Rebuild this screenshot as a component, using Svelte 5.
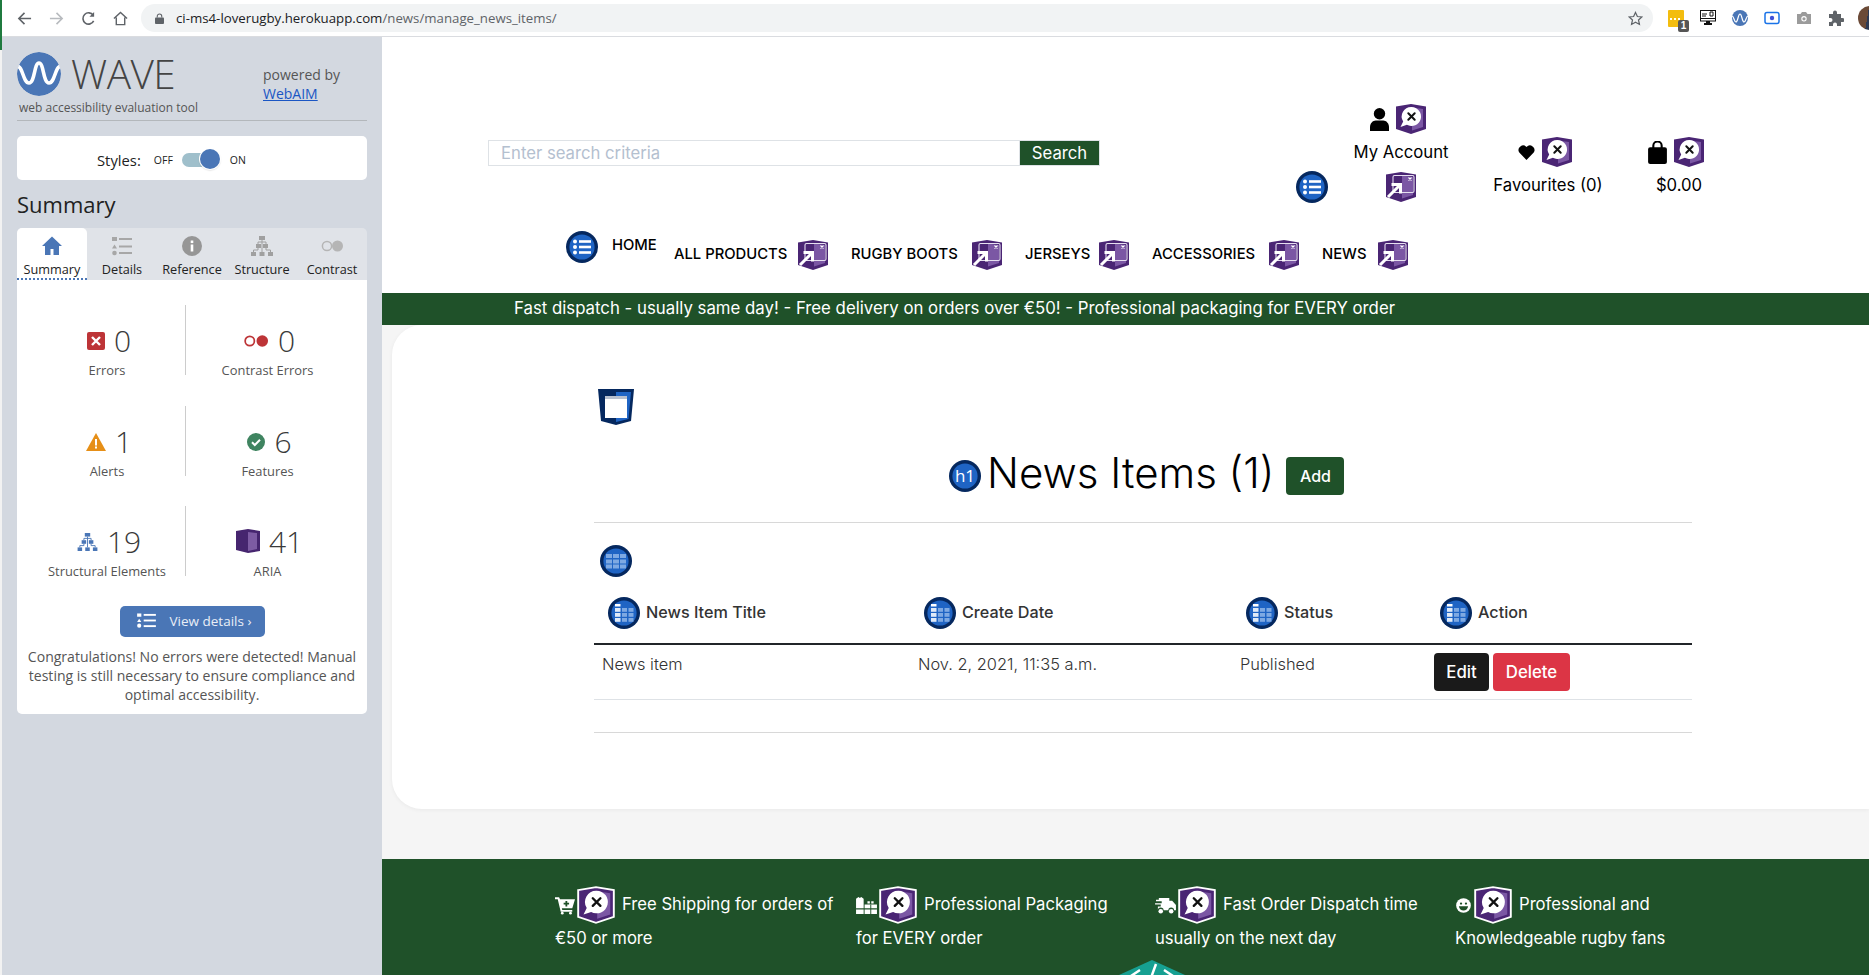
<script lang="ts">
  const navItems = ['ALL PRODUCTS', 'RUGBY BOOTS', 'JERSEYS', 'ACCESSORIES', 'NEWS']
  const tableHeads = ['News Item Title', 'Create Date', 'Status', 'Action']
  const footerItems = [
    { icon: 'cart', first: 'Free Shipping for orders of', second: '€50 or more' },
    { icon: 'gift', first: 'Professional Packaging', second: 'for EVERY order' },
    { icon: 'truck', first: 'Fast Order Dispatch time', second: 'usually on the next day' },
    { icon: 'smile', first: 'Professional and', second: 'Knowledgeable rugby fans' },
  ]
  const stats = [
    { icon: 'error', count: 0, label: 'Errors' },
    { icon: 'contrast', count: 0, label: 'Contrast Errors' },
    { icon: 'alert', count: 1, label: 'Alerts' },
    { icon: 'feature', count: 6, label: 'Features' },
    { icon: 'structure', count: 19, label: 'Structural Elements' },
    { icon: 'aria', count: 41, label: 'ARIA' },
  ]
  const tabs = ['Summary', 'Details', 'Reference', 'Structure', 'Contrast']
</script>

{#snippet shieldBase(outline)}
  <path d="M1 3.5L16 1l15 2.500V26l-15 5L1 26Z" fill="#4a2574" stroke={outline ? '#fff' : 'none'} stroke-width={outline ? 1.6 : 0} />
  <path d="M17 4.5l11 1.500V24l-11 3.500Z" fill="#7b57a4" />
{/snippet}

{#snippet ariaX(outline = false)}
  <svg class="shield" class:outlined={outline} viewBox="0 0 32 32">
    {@render shieldBase(outline)}
    <path d="M16.500 4a9.500 9.500 0 1 1-4.600 17.800L5.500 24l2.700-5.400A9.500 9.500 0 0 1 16.500 4Z" fill="#fff" />
    <path d="M13.300 10.300l6.400 6.400M19.700 10.300l-6.400 6.400" stroke="#111" stroke-width="2" stroke-linecap="round" />
  </svg>
{/snippet}

{#snippet ariaLink()}
  <svg class="shield" viewBox="0 0 32 32">
    {@render shieldBase(false)}
    <rect x="8" y="4.500" width="21" height="17" rx="1.500" fill="none" stroke="#e6dff0" stroke-width="1.100" />
    <path d="M23.500 6.500l3 3M26.500 6.500l-3 3" stroke="#fff" stroke-width="1.100" />
    <path d="M3 26l11.500-11.500M6.500 13.500h9v9" fill="none" stroke="#fff" stroke-width="3" />
  </svg>
{/snippet}

{#snippet blueDot(kind)}
  <svg class="dot" viewBox="0 0 32 32">
    <circle cx="16" cy="16" r="16" fill="#05285f" />
    <circle cx="16" cy="16" r="12.600" fill="#1f64c4" />
    {#if kind === 'list'}
      <g fill="#fff">
        <circle cx="9" cy="10.500" r="2" /><circle cx="9" cy="16" r="2" /><circle cx="9" cy="21.500" r="2" />
        <rect x="13" y="9.200" width="12" height="2.600" /><rect x="13" y="14.700" width="12" height="2.600" /><rect x="13" y="20.200" width="12" height="2.600" />
      </g>
    {:else if kind === 'table'}
      <g fill="#7ea9e2">
        {#each [9, 14.500, 19.500] as y}
          {#each [6, 13, 20] as x}
            <rect {x} {y} width="6" height="4" />
          {/each}
        {/each}
      </g>
    {:else}
      <g fill="#7ea9e2">
        {#each [11, 16, 21] as y}
          <rect x="7" {y} width="5.500" height="3.800" fill="#dfeaf8" />
          <rect x="14" {y} width="5" height="3.800" />
          <rect x="20.500" {y} width="5" height="3.800" />
        {/each}
      </g>
      <rect x="7" y="7" width="5.500" height="2.500" fill="#fff" />
    {/if}
  </svg>
{/snippet}

{#snippet footIcon(kind)}
  <svg class="foot-icon {kind}" viewBox="0 0 22 20" fill="#fff">
    {#if kind === 'cart'}
      <path d="M0 1h4.500l1 2H22l-3 10H7.500l.5 2h11v2H6.300L3 3H0Z" /><circle cx="8" cy="18.500" r="1.500" /><circle cx="17" cy="18.500" r="1.500" />
      <path d="M11.500 5h2v2h2v2h-2v2h-2V9h-2V7h2Z" fill="#1f5129" />
    {:else if kind === 'gift'}
      <path d="M0 3l2.500-2L4 2l1.500-1L8 3v16H0ZM9 9h13v10H9ZM12 5.500h2.500V8H12ZM16 5.500h2.500V8H16Z" />
      <path d="M0 13h22v1.200H0ZM15 9h1v10h-1Z" fill="#1f5129" />
    {:else if kind === 'truck'}
      <path d="M4 2h11v3h3l4 4.500V15h-2a3 3 0 0 0-6 0H9a3 3 0 0 0-6 0V11h3V9H0V7.500h7V5.500H1V4h3Z" />
      <circle cx="6" cy="16" r="2.400" /><circle cx="17" cy="16" r="2.400" />
    {:else}
      <circle cx="11" cy="10" r="9.500" />
      <circle cx="7.800" cy="7.500" r="1.500" fill="#1f5129" /><circle cx="14.200" cy="7.500" r="1.500" fill="#1f5129" />
      <path d="M5 11h12c-.5 3.500-3 5.500-6 5.500S5.500 14.500 5 11Z" fill="#1f5129" />
    {/if}
  </svg>
{/snippet}

{#snippet statIcon(kind)}
  {#if kind === 'error'}
    <svg class="stat-icon" viewBox="0 0 18 18"><rect width="18" height="18" rx="2" fill="#bd3437" /><path d="M5 5l8 8M13 5l-8 8" stroke="#fff" stroke-width="2.400" /></svg>
  {:else if kind === 'contrast'}
    <svg class="stat-icon wide" viewBox="0 0 26 14"><circle cx="6" cy="7" r="4.800" fill="none" stroke="#bd3437" stroke-width="1.800" /><circle cx="19" cy="7" r="6" fill="#bd3437" /></svg>
  {:else if kind === 'alert'}
    <svg class="stat-icon alert" viewBox="0 0 20 18"><path d="M10 0L20 18H0Z" fill="#e68f17" /><rect x="9" y="6" width="2" height="6.500" fill="#fff" /><rect x="9" y="13.500" width="2" height="2" fill="#fff" /></svg>
  {:else if kind === 'feature'}
    <svg class="stat-icon" viewBox="0 0 18 18"><circle cx="9" cy="9" r="9" fill="#3f8460" /><path d="M5 9.300l2.800 2.700L13 6.800" fill="none" stroke="#fff" stroke-width="2" /></svg>
  {:else if kind === 'structure'}
    <svg class="stat-icon tree" viewBox="0 0 22 20" fill="#4a76b6">
      <rect x="8" y="0" width="6" height="4" /><rect x="4.500" y="8" width="5" height="4" /><rect x="12.500" y="8" width="5" height="4" />
      <rect x="0" y="16" width="5" height="4" /><rect x="8.500" y="16" width="5" height="4" /><rect x="17" y="16" width="5" height="4" />
      <path d="M11 4v12M7 12v2H2.500v2M15 12v2h4.500v2M7 8V6h8v2" fill="none" stroke="#4a76b6" />
    </svg>
  {:else}
    <svg class="stat-icon aria" viewBox="0 0 24 24"><path d="M0 2L12 0l12 2v20l-12 2-12-3Z" fill="#46256f" /><path d="M12 3l9 1v16l-9 2Z" fill="#7d5ba3" /></svg>
  {/if}
{/snippet}

<div class="page">
  <div class="sliver"></div>
  <div class="window">
    <header class="chrome">
      <svg class="nav-btn" viewBox="0 0 16 16" fill="none" stroke="#5f6368" stroke-width="1.700"><path d="M15 8H2M8 2L2 8l6 6" /></svg>
      <svg class="nav-btn off" viewBox="0 0 16 16" fill="none" stroke="#b8bbbf" stroke-width="1.700"><path d="M1 8h13M8 2l6 6-6 6" /></svg>
      <svg class="nav-btn" viewBox="0 0 16 16" fill="none" stroke="#5f6368" stroke-width="1.700"><path d="M13.500 10.500A6 6 0 1 1 13 4.500" /><path d="M14 1v5H9" fill="#5f6368" stroke="none" /></svg>
      <svg class="nav-btn" viewBox="0 0 16 16" fill="none" stroke="#5f6368" stroke-width="1.500"><path d="M1 8l7-6.500L15 8M3.500 7v7.500h9V7" /></svg>
      <div class="omnibox">
        <svg class="lock" viewBox="0 0 10 12" fill="#5f6368"><rect y="5" width="10" height="7" rx="1" /><path d="M2.500 5V3.500a2.500 2.500 0 0 1 5 0V5" fill="none" stroke="#5f6368" stroke-width="1.200" /></svg>
        <span class="url">ci-ms4-loverugby.herokuapp.com<span class="url-path">/news/manage_news_items/</span></span>
        <svg class="star" viewBox="0 0 16 16" fill="none" stroke="#5f6368" stroke-width="1.300"><path d="M8 1.500l2 4.400 4.700.5-3.500 3.200 1 4.700L8 11.900l-4.200 2.400 1-4.700L1.300 6.400 6 5.900Z" /></svg>
      </div>
      <div class="extensions">
        <div class="ext-yellow">
          <svg viewBox="0 0 16 17"><rect width="16" height="17" rx="1" fill="#f3bd0f" /><path d="M2 8h2v2H2ZM6 8h2v2H6ZM10 8h2v2h-2Z" fill="#fff" /></svg>
          <span class="ext-badge">1</span>
        </div>
        <svg class="ext" viewBox="0 0 16 16"><rect x="0.500" y="0.500" width="15" height="10.500" fill="#fff" stroke="#111" /><path d="M2 4h5M2 6h4M10 2h3v4h-3ZM0 8.500h16" stroke="#111" fill="none" /><path d="M6 11h4v2h2v2H4v-2h2Z" fill="#111" /></svg>
        <svg class="ext" viewBox="0 0 16 16"><circle cx="8" cy="8" r="8" fill="#4a76b6" /><path d="M0 6c2 0 2 6 4 6s2-8 4-8 2 8 4 8 2-6 4-6" fill="none" stroke="#fff" stroke-width="1.200" /></svg>
        <svg class="ext" viewBox="0 0 16 16"><rect x="1" y="2.500" width="14" height="11" rx="2" fill="none" stroke="#1a73e8" stroke-width="1.500" /><circle cx="8" cy="8" r="2.200" fill="#3f51d8" /></svg>
        <svg class="ext" viewBox="0 0 16 16" fill="#9b9b9b"><path d="M1 4h3.500L6 2h4l1.500 2H15v10H1Z" /><circle cx="8" cy="8.800" r="2.700" fill="#fff" /><circle cx="8" cy="8.800" r="1.600" /></svg>
        <svg class="ext" viewBox="0 0 16 16" fill="#5f6368"><path d="M1 4h4V2.500a2 2 0 0 1 4 0V4h4v4h1.500a2 2 0 0 1 0 4H13v4H9v-1.500a2 2 0 0 0-4 0V16H1v-4h1.500a2 2 0 0 0 0-4H1Z" /></svg>
        <div class="avatar"></div>
      </div>
    </header>

    <div class="body">
      <aside class="wave">
        <div class="brand">
          <div class="brand-left">
            <div class="logo-row">
              <svg class="logo" viewBox="0 0 44 44">
                <circle cx="22" cy="22" r="22" fill="#4a76b6" />
                <path d="M0 14c6 0 6 17 12 17s5-20 10-20 4 20 10 20 6-17 12-17" fill="none" stroke="#fff" stroke-width="3.600" />
              </svg>
              <span class="logo-text">WAVE</span>
            </div>
            <div class="tagline">web accessibility evaluation tool</div>
          </div>
          <div class="powered">
            powered by<br />
            <a href="#webaim">WebAIM</a>
          </div>
        </div>

        <div class="styles-card">
          <span class="styles-label">Styles:</span>
          <span class="toggle-word">OFF</span>
          <span class="toggle"><span class="knob"></span></span>
          <span class="toggle-word">ON</span>
        </div>

        <h2 class="summary-title">Summary</h2>

        <div class="tabs">
          {#each tabs as tab, i}
            <div class="tab" class:active={i === 0}>
              <svg class="tab-icon" viewBox="0 0 22 22">
                {#if i === 0}
                  <path d="M11 1.500L1 11h3v9h5.500v-6h3v6H18v-9h3Z" fill="#4a76b6" />
                {:else if i === 1}
                  <g fill="#a7a7a7"><rect x="1" y="2" width="5" height="4" /><path d="M3.500 9.500l2.500 4H1Z" /><circle cx="3.500" cy="18" r="2.300" /><rect x="8" y="3" width="13" height="2" /><rect x="8" y="10.500" width="13" height="2" /><rect x="8" y="17" width="13" height="2" /></g>
                {:else if i === 2}
                  <circle cx="11" cy="11" r="10" fill="#969696" /><rect x="9.700" y="9.500" width="2.600" height="7" fill="#fff" /><rect x="9.700" y="5.500" width="2.600" height="2.600" fill="#fff" />
                {:else if i === 3}
                  <g fill="#a0a0a0"><rect x="8" y="1" width="6" height="4" /><rect x="5" y="9" width="5" height="4" /><rect x="12" y="9" width="5" height="4" /><rect x="0" y="17" width="5" height="4" /><rect x="8.500" y="17" width="5" height="4" /><rect x="17" y="17" width="5" height="4" /></g>
                  <path d="M11 5v12M7 13v2H2.500v2M15 13v2h4.500v2M7 9V7h8v2" fill="none" stroke="#a0a0a0" />
                {:else}
                  <circle cx="6" cy="11" r="4.600" fill="none" stroke="#b5b5b5" stroke-width="1.500" /><circle cx="16.500" cy="11" r="5.500" fill="#b5b5b5" />
                {/if}
              </svg>
              <span>{tab}</span>
            </div>
          {/each}
        </div>

        <div class="panel">
          <div class="stats">
            {#each stats as stat}
              <div class="stat">
                <div class="stat-top">
                  {@render statIcon(stat.icon)}
                  <span class="count">{stat.count}</span>
                </div>
                <div class="stat-label">{stat.label}</div>
              </div>
            {/each}
          </div>
          <button class="view-details">
            <svg viewBox="0 0 20 16" fill="#fff"><rect x="0" y="0.500" width="4.500" height="3.500" /><path d="M2.200 6l2.300 3.500H0Z" /><circle cx="2.200" cy="13.500" r="2.200" /><rect x="7" y="1" width="13" height="2" /><rect x="7" y="7" width="13" height="2" /><rect x="7" y="13" width="13" height="2" /></svg>
            <span>View details ›</span>
          </button>
          <p class="congrats">Congratulations! No errors were detected! Manual testing is still necessary to ensure compliance and optimal accessibility.</p>
        </div>
      </aside>

      <main class="site">
        <div class="site-top">
          <div class="search">
            <span class="search-input">Enter search criteria</span>
            <span class="search-btn">Search</span>
          </div>
          <div class="account">
            <div class="icon-row">
              <svg class="user" viewBox="0 0 20 24" fill="#000"><circle cx="10" cy="6" r="6" /><path d="M0 24v-4c0-4 3-7 6-7h8c3 0 6 3 6 7v4Z" /></svg>
              {@render ariaX()}
            </div>
            <div class="head-label">My Account</div>
            <span class="account-list">{@render blueDot('list')}</span>
            <span class="account-link">{@render ariaLink()}</span>
          </div>
          <div class="head-item favourites">
            <div class="icon-row">
              <svg class="heart" viewBox="0 0 16 15" fill="#000"><path d="M8 15L1.200 8A4.300 4.300 0 0 1 8 2.800 4.300 4.300 0 0 1 14.800 8Z" /></svg>
              {@render ariaX()}
            </div>
            <div class="head-label">Favourites (0)</div>
          </div>
          <div class="head-item basket">
            <div class="icon-row">
              <svg class="bag" viewBox="0 0 18 22"><rect y="6" width="18" height="16" rx="2" fill="#000" /><path d="M5 9V4.500a4 4 0 0 1 8 0V9" fill="none" stroke="#000" stroke-width="2" /></svg>
              {@render ariaX()}
            </div>
            <div class="head-label">$0.00</div>
          </div>
        </div>

        <nav class="menu">
          {@render blueDot('list')}
          <a class="home" href="#home">HOME</a>
          {#each navItems as item}
            <div class="menu-item">
              <span>{item}</span>
              {@render ariaLink()}
            </div>
          {/each}
        </nav>

        <div class="banner">Fast dispatch - usually same day! - Free delivery on orders over €50! - Professional packaging for EVERY order</div>

        <div class="content">
          <section class="card">
            <svg class="html-badge" viewBox="0 0 36 36">
              <path d="M0 0h36l-3 32-15 4-15-4Z" fill="#05285f" />
              <path d="M18 3h15l-2.500 27L18 33Z" fill="#1f64c4" />
              <rect x="7" y="7" width="22" height="22" fill="#fff" />
              <rect x="7" y="7" width="22" height="3" fill="#b8c0cf" />
            </svg>

            <div class="title-row">
              <svg class="dot" viewBox="0 0 32 32">
                <circle cx="16" cy="16" r="16" fill="#05285f" />
                <circle cx="16" cy="16" r="12.600" fill="#1f64c4" />
                <text x="16" y="22" text-anchor="middle" fill="#fff" font-size="17" font-family="Open Sans, sans-serif">h1</text>
              </svg>
              <h1>News Items (1)</h1>
              <a class="btn btn-add" href="#add">Add</a>
            </div>

            <hr class="rule first" />

            <div class="table-mark">{@render blueDot('table')}</div>

            <table>
              <thead>
                <tr>
                  {#each tableHeads as head}
                    <th><div class="th-inner">{@render blueDot('th')}<span>{head}</span></div></th>
                  {/each}
                </tr>
              </thead>
              <tbody>
                <tr>
                  <td>News item</td>
                  <td>Nov. 2, 2021, 11:35 a.m.</td>
                  <td>Published</td>
                  <td>
                    <div class="actions">
                      <a class="btn btn-edit" href="#edit">Edit</a>
                      <a class="btn btn-delete" href="#delete">Delete</a>
                    </div>
                  </td>
                </tr>
              </tbody>
            </table>

            <hr class="rule last" />
          </section>
        </div>

        <footer class="site-foot">
          {#each footerItems as item}
            <div class="foot-item">
              <div class="foot-line">
                {@render footIcon(item.icon)}
                {@render ariaX(true)}
                <span class="foot-first">{item.first}</span>
              </div>
              <div class="foot-second">{item.second}</div>
            </div>
          {/each}
          <svg class="hex" viewBox="0 0 88 40">
            <path d="M0 20L44 0l44 20v20H0Z" fill="#16a092" />
            <path d="M32 10l-9 6 9 6M56 10l9 6-9 6M48 4l-8 22" fill="none" stroke="#fff" stroke-width="2.500" />
          </svg>
        </footer>
      </main>
    </div>
  </div>
</div>

<style>
  :global(body) {
    margin: 0;
    background: #fff;
  }

  .page {
    display: flex;
    width: 1869px;
    height: 975px;
    overflow: hidden;
    font-family: 'Open Sans', sans-serif;
  }

  .sliver {
    width: 2px;
    flex-shrink: 0;
    background: linear-gradient(#1f7a3f 0 50px, #f2f2f2 50px);
  }

  .window {
    flex: 1;
    display: flex;
    flex-direction: column;
    min-width: 0;
  }

  /* browser toolbar */
  .chrome {
    height: 36px;
    border-bottom: 1px solid #dadce0;
    display: flex;
    align-items: center;
    background: #fff;
    flex-shrink: 0;
  }

  .nav-btn {
    width: 15px;
    height: 15px;
    margin-left: 15px;
    margin-right: 2px;
    flex-shrink: 0;
  }

  .omnibox {
    width: 1512px;
    height: 28px;
    margin-left: 11px;
    background: #f1f3f4;
    border-radius: 14px;
    display: flex;
    align-items: center;
    padding: 0 10px 0 14px;
    box-sizing: border-box;
    flex-shrink: 0;
  }

  .lock {
    width: 9px;
    height: 11px;
    margin-right: 12px;
  }

  .url {
    font-size: 13.250px;
    color: #202124;
    white-space: nowrap;
  }

  .url-path {
    color: #5f6368;
  }

  .star {
    width: 15px;
    height: 15px;
    margin-left: auto;
  }

  .extensions {
    display: flex;
    align-items: center;
    margin-left: 15px;
    flex-shrink: 0;
  }

  .ext-yellow {
    position: relative;
    width: 16px;
    height: 17px;
    margin-right: 16px;
  }

  .ext-yellow svg {
    width: 16px;
    height: 17px;
    display: block;
  }

  .ext-badge {
    position: absolute;
    left: 10px;
    top: 10px;
    width: 11px;
    height: 12px;
    background: #555;
    color: #fff;
    border-radius: 2px;
    font: 700 10px/12px 'Liberation Sans', sans-serif;
    text-align: center;
  }

  .ext {
    width: 16px;
    height: 16px;
    margin-right: 16px;
    flex-shrink: 0;
  }

  .avatar {
    width: 24px;
    height: 24px;
    margin-left: -2px;
    border-radius: 50%;
    background: linear-gradient(100deg, #6b4a37 0 40%, #2e3b55 40%);
    flex-shrink: 0;
  }

  .body {
    flex: 1;
    display: flex;
    min-height: 0;
  }

  /* WAVE sidebar */
  .wave {
    width: 380px;
    flex-shrink: 0;
    background: #d3d8e0;
    padding: 15px 15px 0;
    box-sizing: border-box;
    color: #333;
  }

  .brand {
    display: flex;
    justify-content: space-between;
    height: 68px;
    border-bottom: 1px solid #b3b7bb;
  }

  .logo-row {
    display: flex;
    align-items: center;
    gap: 10px;
    height: 44px;
  }

  .logo {
    width: 44px;
    height: 44px;
    clip-path: circle(50%);
  }

  .logo-text {
    font-size: 40.500px;
    font-weight: 300;
    color: #444;
    line-height: 44px;
    letter-spacing: -0.5px;
  }

  .tagline {
    font-size: 12px;
    color: #555;
    margin: 4px 0 0 2px;
    line-height: 16px;
  }

  .powered {
    font-size: 14px;
    line-height: 19px;
    color: #555;
    padding-top: 13px;
    width: 104px;
  }

  .powered a {
    color: #1a56c4;
  }

  .styles-card {
    height: 44px;
    margin-top: 15px;
    padding: 4px 0 0 80px;
    background: #fff;
    border-radius: 5px;
    display: flex;
    align-items: center;
    box-sizing: border-box;
  }

  .styles-label {
    font-size: 14.800px;
    color: #222;
    margin-right: 13px;
  }

  .toggle-word {
    font-size: 10.500px;
    color: #222;
  }

  .toggle {
    position: relative;
    width: 33px;
    height: 14px;
    margin: 0 15px 0 9px;
    border-radius: 7px;
    background: #9fbfcb;
  }

  .knob {
    position: absolute;
    right: -5px;
    top: -4px;
    width: 20px;
    height: 20px;
    border-radius: 50%;
    background: #4a76b6;
    box-shadow: 0 0 0 1px #fff, 0 1px 2px rgba(0, 0, 0, 0.3);
  }

  .summary-title {
    margin: 5px 0 4px;
    font-size: 22px;
    font-weight: 400;
    line-height: 39px;
    color: #222;
    height: 39px;
  }

  .tabs {
    display: grid;
    grid-template-columns: repeat(5, 70px);
    height: 52px;
    background: #e0e3e8;
    border-radius: 5px 5px 0 0;
  }

  .tab {
    display: flex;
    flex-direction: column;
    align-items: center;
    font-size: 12.700px;
    color: #222;
    padding-top: 7px;
    box-sizing: border-box;
    white-space: nowrap;
  }

  .tab span {
    line-height: 18px;
    margin-top: 3px;
  }

  .tab.active {
    background: #fff;
    border-radius: 5px 5px 0 0;
    border-bottom: 2px dotted #4a76b6;
  }

  .tab-icon {
    width: 22px;
    height: 22px;
  }

  .panel {
    background: #fff;
    border-radius: 0 0 5px 5px;
    padding: 25px 0 10px;
    text-align: center;
  }

  .stats {
    display: grid;
    grid-template-columns: 156px 164px;
    grid-auto-rows: 70px;
    row-gap: 30.5px;
    padding-left: 12px;
  }

  .stat {
    padding-top: 18px;
    box-sizing: border-box;
  }

  .stat:nth-child(even) {
    border-left: 1px solid #ccc;
  }

  .stat-top {
    display: flex;
    align-items: center;
    justify-content: center;
    gap: 9px;
    height: 36px;
    padding-left: 4px;
  }

  .stat-icon {
    width: 18px;
    height: 18px;
  }

  .stat-icon.wide {
    width: 25px;
  }

  .stat-icon.tree {
    width: 21px;
  }

  .stat-icon.alert {
    width: 20px;
  }

  .stat-icon.aria {
    width: 24px;
    height: 24px;
    margin-top: -3px;
  }

  .count {
    font-size: 30px;
    font-weight: 300;
    color: #3a3a3a;
    line-height: 36px;
  }

  .stat-label {
    font-size: 12.900px;
    line-height: 16px;
    color: #555;
    margin-top: 3px;
    white-space: nowrap;
  }

  .view-details {
    display: inline-flex;
    align-items: center;
    gap: 14px;
    width: 145px;
    height: 31px;
    margin-top: 30px;
    padding: 0 0 2px 17px;
    border: none;
    border-radius: 5px;
    background: #4a76b6;
    color: #e9eef6;
    font: 400 13.500px 'Open Sans', sans-serif;
    box-sizing: border-box;
    white-space: nowrap;
  }

  .view-details svg {
    width: 19px;
    height: 15px;
    flex-shrink: 0;
  }

  .congrats {
    margin: 10px 0 0;
    padding: 0 8px;
    font-size: 14.050px;
    line-height: 19px;
    color: #555;
  }

  /* the shop page */
  .site {
    flex: 1;
    min-width: 0;
    background: #fff;
    font-family: Inter, 'Noto Sans', sans-serif;
    color: #000;
  }

  .site-top {
    height: 194px;
    display: flex;
    align-items: flex-start;
    padding-left: 106px;
  }

  .search {
    display: flex;
    width: 612px;
    height: 26px;
    margin-top: 103px;
    flex-shrink: 0;
  }

  .search-input {
    flex: 1;
    border: 1px solid #dee2e6;
    border-right: none;
    padding-left: 12px;
    font-size: 16.700px;
    line-height: 24px;
    color: #b4c0cf;
  }

  .search-btn {
    width: 81px;
    background: #1f5129;
    border: 1px solid #dee2e6;
    box-sizing: border-box;
    color: #fff;
    font-size: 16.700px;
    line-height: 24px;
    text-align: center;
  }

  .account {
    position: relative;
    width: 122px;
    margin: 66px 0 0 240px;
    text-align: center;
  }

  .icon-row {
    display: flex;
    justify-content: center;
    align-items: center;
    gap: 6px;
    height: 32px;
    margin-left: -6px;
  }

  .head-label {
    font-size: 16.700px;
    line-height: 24px;
    margin-top: 5px;
    white-space: nowrap;
  }

  .account-list {
    position: absolute;
    left: -44px;
    top: 68px;
  }

  .account-link {
    display: flex;
    justify-content: center;
    margin-top: 7px;
  }

  .head-item {
    margin-top: 99px;
    text-align: center;
  }

  .favourites {
    width: 116px;
    margin-left: 28px;
  }

  .basket {
    width: 78px;
    margin-left: 34px;
  }

  .user {
    width: 19px;
    height: 23px;
  }

  .heart {
    width: 17px;
    height: 16px;
  }

  .bag {
    width: 19px;
    height: 23px;
  }

  .shield {
    width: 32px;
    height: 32px;
    flex-shrink: 0;
    display: block;
  }

  .shield.outlined {
    width: 38px;
    height: 38px;
  }

  .dot {
    width: 32px;
    height: 32px;
    flex-shrink: 0;
    display: block;
  }

  .menu {
    display: grid;
    grid-template-columns: 32px 76px 177px 174px 127px 170px 87px;
    height: 62px;
    padding-left: 184px;
    align-items: start;
  }

  .home {
    margin: 3px 0 0 14px;
    color: #000;
    text-decoration: none;
    font-size: 14.800px;
    font-weight: 500;
    line-height: 22px;
  }

  .menu-item {
    display: flex;
    align-items: center;
    justify-content: space-between;
    height: 32px;
    margin-top: 8px;
    padding-right: 22px;
    font-size: 14.800px;
    font-weight: 500;
    white-space: nowrap;
  }

  .menu-item span {
    margin-bottom: 3px;
  }

  .menu-item:last-child {
    padding-right: 0;
    width: 87px;
  }

  .banner {
    height: 32px;
    padding-left: 132px;
    background: #1f5129;
    color: #fff;
    font-size: 16.800px;
    line-height: 31px;
    font-weight: 400;
    white-space: nowrap;
  }

  .content {
    background: #f5f5f5;
    height: 534px;
  }

  .card {
    margin-left: 10px;
    height: 484px;
    padding: 64px 177px 0 202px;
    background: #fff;
    border-radius: 30px 0 0 30px;
    box-shadow: 0 1px 4px rgba(0, 0, 0, 0.05);
    box-sizing: border-box;
  }

  .html-badge {
    display: block;
    width: 36px;
    height: 36px;
    margin-left: 4px;
  }

  .title-row {
    display: flex;
    align-items: center;
    height: 38px;
    margin-top: 32px;
    padding-left: 355px;
    box-sizing: border-box;
  }

  h1 {
    margin: 0 12px 0 6px;
    font-size: 42px;
    font-weight: 300;
    line-height: 38px;
    white-space: nowrap;
    position: relative;
    top: -3px;
  }

  .btn {
    display: block;
    border-radius: 4px;
    color: #fff;
    font-weight: 500;
    font-size: 16.800px;
    line-height: 38px;
    height: 38px;
    text-align: center;
    text-decoration: none;
  }

  .btn-add {
    width: 58px;
    background: #1f5129;
    font-size: 16px;
  }

  .rule {
    border: none;
    border-top: 1px solid #d8d8d8;
    margin: 0;
  }

  .rule.first {
    margin-top: 27px;
  }

  .rule.last {
    margin-top: 32px;
  }

  .table-mark {
    margin: 22px 0 12px 6px;
  }

  table {
    width: 1098px;
    table-layout: fixed;
    border-collapse: collapse;
  }

  th:nth-child(1) {
    width: 316px;
  }

  th:nth-child(2) {
    width: 322px;
  }

  th:nth-child(3) {
    width: 194px;
  }

  th {
    box-sizing: border-box;
    padding: 8px 0 14px 14px;
    border-bottom: 2px solid #212529;
    text-align: left;
    font-size: 16.200px;
    font-weight: 500;
    color: #333;
  }

  .th-inner {
    display: flex;
    align-items: center;
    gap: 6px;
    height: 32px;
  }

  .th-inner span {
    margin-bottom: 2px;
  }

  td {
    padding: 7px 8px 9px;
    border-bottom: 1px solid #dee2e6;
    font-size: 16.400px;
    font-weight: 300;
    line-height: 24px;
    color: #333;
    vertical-align: top;
  }

  .actions {
    display: flex;
    gap: 4px;
    margin-top: 1px;
    margin-bottom: -1px;
  }

  .btn-edit {
    width: 55px;
    background: #1a1a1a;
  }

  .btn-delete {
    width: 77px;
    background: #dc3545;
  }

  .site-foot {
    position: relative;
    height: 116px;
    background: #1f5129;
    color: #fff;
    display: grid;
    grid-template-columns: 301px 299px 300px auto;
    padding: 27px 0 0 173px;
    box-sizing: border-box;
    font-size: 16.650px;
    font-weight: 400;
  }

  .foot-line {
    display: flex;
    align-items: center;
    height: 38px;
    white-space: nowrap;
  }

  .foot-icon {
    width: 20px;
    height: 19px;
    margin-right: 2px;
    flex-shrink: 0;
  }

  .foot-icon.gift,
  .foot-icon.truck {
    width: 21px;
  }

  .foot-icon.smile {
    width: 17px;
  }

  .foot-first {
    margin: 0 0 2px 7px;
  }

  .foot-second {
    margin-top: 2px;
    line-height: 24px;
    white-space: nowrap;
  }

  .hex {
    position: absolute;
    left: 726px;
    top: 101px;
    width: 88px;
    height: 40px;
  }
</style>
